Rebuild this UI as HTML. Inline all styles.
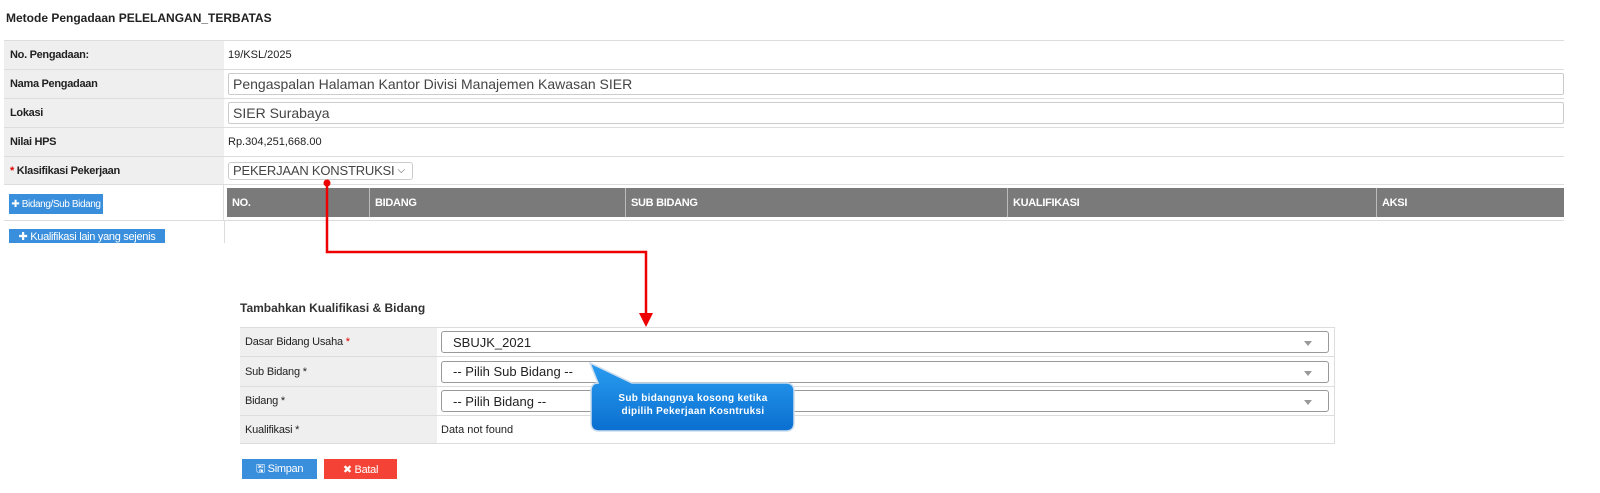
<!DOCTYPE html>
<html><head><meta charset="utf-8"><style>
*{box-sizing:border-box;margin:0;padding:0}
body{width:1600px;height:493px;background:#fff;position:relative;overflow:hidden;font-family:"Liberation Sans",sans-serif;color:#222}
.a{position:absolute}
.lbl{position:absolute;left:4px;width:220px;background:#efefef;border-bottom:1px solid #ddd;font-size:11px;font-weight:bold;padding-left:6px;display:flex;align-items:center;letter-spacing:-0.3px;white-space:nowrap}
.val{position:absolute;left:224px;width:1340px;border-bottom:1px solid #ddd;display:flex;align-items:center;font-size:11px;padding-left:4px}
.inp{border:1px solid #ccc;height:22px;width:100%;font-size:14px;color:#444;padding-left:4px;display:flex;align-items:center;border-radius:2px;white-space:nowrap}
.th{position:absolute;top:188px;height:29px;background:#7a7a7a;color:#fff;font-size:11px;font-weight:bold;padding-left:5px;display:flex;align-items:center;border-right:1px solid #bbb;letter-spacing:-0.3px}
.btn{position:absolute;color:#fff;font-size:11px;display:flex;align-items:center;justify-content:center;white-space:nowrap;letter-spacing:-0.3px}
.fl{position:absolute;left:240px;width:197px;background:#efefef;border-bottom:1px solid #ddd;font-size:11px;padding-left:5px;display:flex;align-items:center;letter-spacing:-0.2px}
.fv{position:absolute;left:437px;width:897px;border-bottom:1px solid #ddd;display:flex;align-items:center;padding-left:4px;font-size:11px}
.sel{border:1px solid #999;border-radius:3px;height:22px;width:888px;font-size:13px;padding-left:11px;display:flex;align-items:center;position:relative;color:#222}
.sel:after{content:"";position:absolute;right:16px;top:9px;border:4px solid transparent;border-top:5px solid #999}
</style></head><body>
<div class="a" style="left:6px;top:11px;font-size:12px;font-weight:bold">Metode Pengadaan PELELANGAN_TERBATAS</div>
<div class="a" style="left:4px;top:40px;width:1560px;border-top:1px solid #ddd"></div>

<div class="lbl" style="top:41px;height:29px">No. Pengadaan:</div>
<div class="val" style="top:41px;height:29px">19/KSL/2025</div>
<div class="lbl" style="top:70px;height:29px">Nama Pengadaan</div>
<div class="val" style="top:70px;height:29px"><div class="inp">Pengaspalan Halaman Kantor Divisi Manajemen Kawasan SIER</div></div>
<div class="lbl" style="top:99px;height:29px">Lokasi</div>
<div class="val" style="top:99px;height:29px"><div class="inp">SIER Surabaya</div></div>
<div class="lbl" style="top:128px;height:29px">Nilai HPS</div>
<div class="val" style="top:128px;height:29px">Rp.304,251,668.00</div>
<div class="lbl" style="top:157px;height:28px"><span style="color:#d00">*</span>&nbsp;Klasifikasi Pekerjaan</div>
<div class="val" style="top:157px;height:28px"><div class="inp" style="width:185px;height:18px;font-size:13px;border-radius:3px;letter-spacing:-0.2px">PEKERJAAN KONSTRUKSI <span style="font-size:10px;margin-left:3px">&#9013;</span></div></div>
<div class="lbl" style="top:185px;height:36px;background:#fff;border-right:1px solid #ddd;padding-left:5px"></div>
<div class="btn" style="left:9px;top:194px;background:#3a8fdd;width:94px;height:20px;font-size:10px;letter-spacing:-0.4px">✚ Bidang/Sub Bidang</div>
<div class="val" style="top:185px;height:36px"></div>
<div class="th" style="left:227px;width:143px">NO.</div>
<div class="th" style="left:370px;width:256px">BIDANG</div>
<div class="th" style="left:626px;width:382px">SUB BIDANG</div>
<div class="th" style="left:1008px;width:369px">KUALIFIKASI</div>
<div class="th" style="left:1377px;width:187px;border-right:none">AKSI</div>
<div class="a" style="left:224px;top:221px;width:1px;height:22px;background:#ddd"></div>
<div class="btn" style="left:9px;top:229px;width:156px;height:14px;background:#3a8fdd;align-items:flex-start;overflow:hidden;line-height:17px">✚ Kualifikasi lain yang sejenis</div>

<svg class="a" style="left:0;top:0" width="1600" height="493">
<circle cx="327" cy="183" r="3.5" fill="#e00"/>
<path d="M327 183 V252 H646 V316" stroke="#e00" stroke-width="2.5" fill="none"/>
<path d="M639 313 L653 313 L646 327 Z" fill="#e00"/>
</svg>

<div class="a" style="left:240px;top:301px;font-size:12px;font-weight:bold;color:#333">Tambahkan Kualifikasi &amp; Bidang</div>
<div class="a" style="left:240px;top:327px;width:1094px;border-top:1px solid #ddd"></div>
<div class="fl" style="top:328px;height:29px">Dasar Bidang Usaha&nbsp;<span style="color:#d00">*</span></div>
<div class="fv" style="top:328px;height:29px"><div class="sel">SBUJK_2021</div></div>
<div class="fl" style="top:357px;height:30px">Sub Bidang *</div>
<div class="fv" style="top:357px;height:30px"><div class="sel">-- Pilih Sub Bidang --</div></div>
<div class="fl" style="top:387px;height:29px">Bidang *</div>
<div class="fv" style="top:387px;height:29px"><div class="sel">-- Pilih Bidang --</div></div>
<div class="fl" style="top:416px;height:28px">Kualifikasi *</div>
<div class="fv" style="top:416px;height:28px">Data not found</div>
<div class="a" style="left:1334px;top:327px;width:1px;height:117px;background:#ddd"></div>

<svg class="a" style="left:580px;top:355px" width="230" height="85">
<defs><linearGradient id="g" x1="0" y1="0" x2="0" y2="1"><stop offset="0" stop-color="#2a9df0"/><stop offset="1" stop-color="#0a6fd0"/></linearGradient></defs>
<path d="M18 28 L10 8 L52 28 L206 28 Q214 28 214 36 L214 68 Q214 76 206 76 L19 76 Q11 76 11 68 L11 36 Q11 28 18 28 Z" fill="url(#g)" stroke="#cde" stroke-width="1.5"/>
</svg>
<div class="a" style="left:592px;top:392px;width:202px;text-align:center;color:#fff;font-size:10px;font-weight:bold;line-height:13px;letter-spacing:.3px">Sub bidangnya kosong ketika<br>dipilih Pekerjaan Kosntruksi</div>

<div class="btn" style="left:242px;top:459px;width:75px;height:20px;background:#3a8fdd">🖫 Simpan</div>
<div class="btn" style="left:324px;top:459px;width:73px;height:20px;background:#f44336">✖ Batal</div>
</body></html>
